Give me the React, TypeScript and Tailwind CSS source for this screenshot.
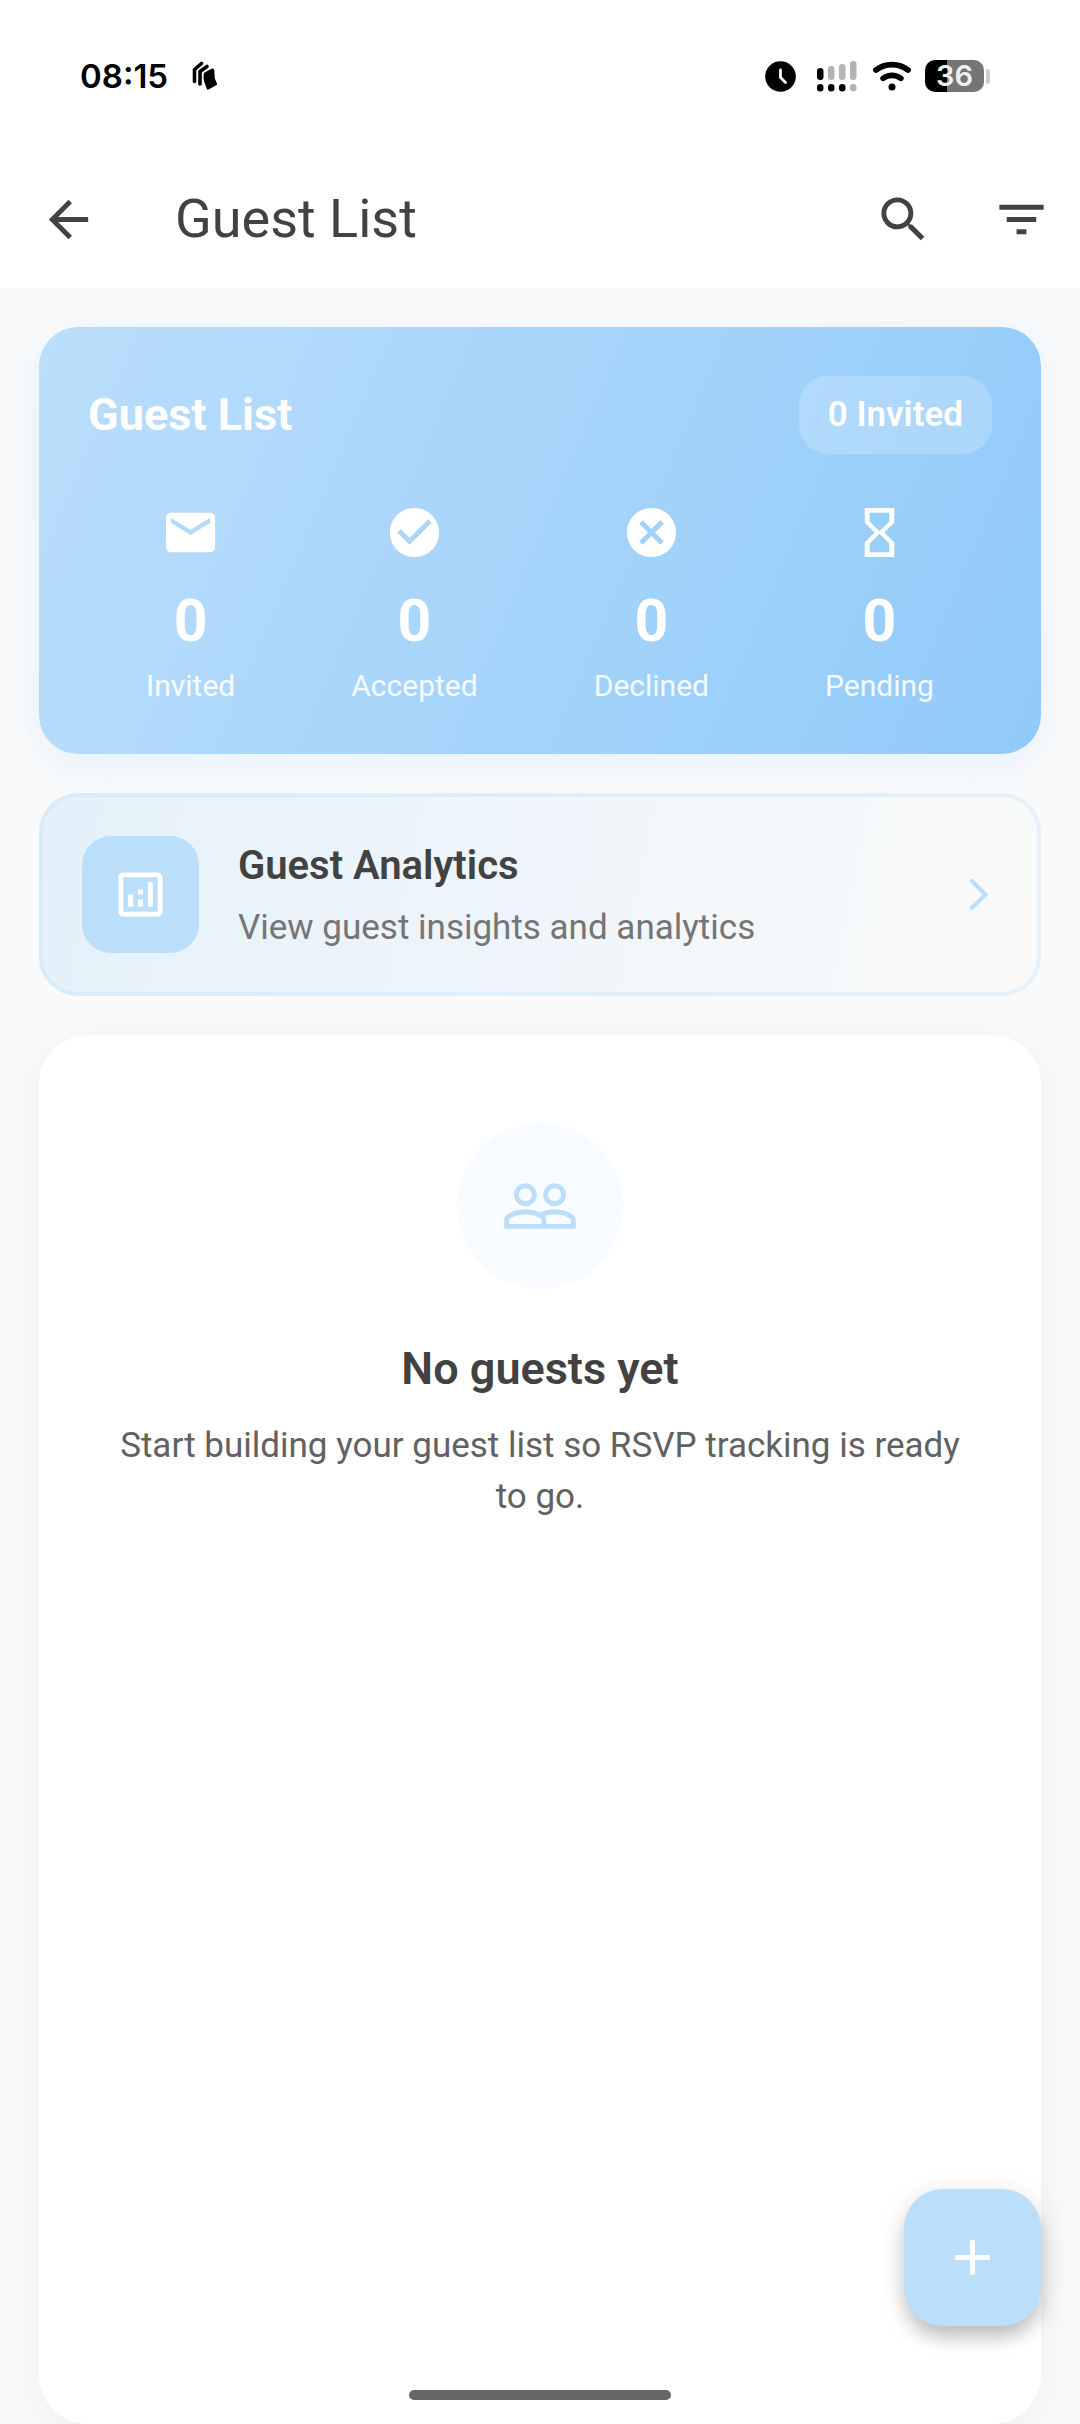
import React from "react";
import {
  MdArrowBack,
  MdSearch,
  MdFilterList,
  MdEmail,
  MdCheckCircle,
  MdCancel,
  MdHourglassEmpty,
  MdOutlineAnalytics,
  MdArrowForwardIos,
  MdPeopleOutline,
  MdAdd,
} from "react-icons/md";
import type { IconType } from "react-icons";

const stats: { label: string; value: number; Icon: IconType }[] = [
  { label: "Invited", value: 0, Icon: MdEmail },
  { label: "Accepted", value: 0, Icon: MdCheckCircle },
  { label: "Declined", value: 0, Icon: MdCancel },
  { label: "Pending", value: 0, Icon: MdHourglassEmpty },
];

function CardsIcon() {
  return (
    <svg width="26" height="30" viewBox="0 0 26 30" aria-hidden="true">
      <g fill="none" stroke="#000" strokeWidth="3.6" strokeLinecap="round" strokeLinejoin="round">
        <path d="M2.5 20.5V8.5L9.5 2.5" />
        <path d="M8 23V10.5L15 5.5" />
      </g>
      <path
        d="M12.5 11.5 20 7.6Q22 7 22.3 9L22.8 17.5 25 22.5Q25.2 23.6 24.3 24.2L16.5 28.6Q15.4 29 14.9 28L12 20Q11.4 17.5 11.6 13Z"
        fill="#000"
      />
    </svg>
  );
}

function ClockIcon() {
  return (
    <svg width="31" height="31" viewBox="0 0 31 31" aria-hidden="true">
      <circle cx="15.5" cy="15.5" r="15.3" fill="#000" />
      <path d="M15.5 9v7.5l5 5" fill="none" stroke="#fff" strokeWidth="2.8" strokeLinecap="round" strokeLinejoin="round" />
    </svg>
  );
}

function SignalIcon() {
  return (
    <svg width="40" height="31" viewBox="0 0 40 31" aria-hidden="true">
      <rect x="0" y="7" width="6.5" height="12" rx="3.2" fill="#000" />
      <rect x="11" y="5" width="6.5" height="14" rx="3.2" fill="#b3b3b3" />
      <rect x="22" y="3" width="6.5" height="16" rx="3.2" fill="#b3b3b3" />
      <rect x="33" y="0" width="6.5" height="19" rx="3.2" fill="#b3b3b3" />
      <rect x="0" y="23" width="6.5" height="7.5" rx="3.2" fill="#000" />
      <rect x="11" y="23" width="6.5" height="7.5" rx="3.2" fill="#000" />
      <rect x="22" y="23" width="6.5" height="7.5" rx="3.2" fill="#000" />
      <rect x="33" y="23" width="6.5" height="7.5" rx="3.2" fill="#b3b3b3" />
    </svg>
  );
}

function WifiIcon() {
  return (
    <svg width="38" height="30" viewBox="0 0 38 30" aria-hidden="true">
      <g fill="none" stroke="#000" strokeWidth="5.8" strokeLinecap="round">
        <path d="M3 9C12 1.8 26 1.8 35 9" />
        <path d="M10.2 17.2c5.2-3.9 12.400-3.900 17.600 0" />
      </g>
      <circle cx="19" cy="26" r="3.5" fill="#000" />
    </svg>
  );
}

function StatusBar() {
  return (
    <div className="flex items-center justify-between pt-[56px] pr-[90px] pl-20 text-black">
      <div className="flex items-center gap-6">
        <span className="font-[Inter,sans-serif] text-[33px] leading-10 font-semibold">08:15</span>
        <CardsIcon />
      </div>
      <div className="flex items-center">
        <ClockIcon />
        <span className="ml-[21px] flex">
          <SignalIcon />
        </span>
        <span className="ml-4 flex">
          <WifiIcon />
        </span>
        <div className="ml-[14px] flex items-center gap-[2px]">
          <div className="flex h-8 w-[59px] items-center justify-center rounded-[10px] bg-[linear-gradient(90deg,#000_37%,#757575_37%)] font-[Inter,sans-serif] text-[29px] leading-8 font-semibold text-[#f0f0f0]">
            36
          </div>
          <div className="h-[15px] w-1 rounded-r-[3px] bg-[#cccccc]" />
        </div>
      </div>
    </div>
  );
}

function AppBar() {
  return (
    <header className="flex items-center pb-[10px] pl-[9px] text-[#424242]">
      <button type="button" aria-label="Back" className="flex size-[118px] items-center justify-center">
        <MdArrowBack size={59} />
      </button>
      <h1 className="ml-12 flex-1 text-[54px] leading-[68px]">Guest List</h1>
      <button type="button" aria-label="Search" className="flex size-[118px] items-center justify-center">
        <MdSearch size={59} />
      </button>
      <button type="button" aria-label="Filter" className="flex size-[118px] items-center justify-center">
        <MdFilterList size={59} />
      </button>
    </header>
  );
}

function SummaryCard() {
  return (
    <section className="rounded-[39px] bg-[linear-gradient(113deg,#bbdefb,#90caf9)] p-[49px] text-white shadow-[0_10px_39px_rgba(187,222,251,0.3)]">
      <div className="flex items-center justify-between">
        <h2 className="text-[45px] leading-[58px] font-bold">Guest List</h2>
        <span className="rounded-[29px] bg-white/20 px-[29px] py-[14px] text-[35px] leading-[50px] font-semibold">
          0 Invited
        </span>
      </div>
      <ul className="mt-[49px] flex justify-around">
        {stats.map(({ label, value, Icon }) => (
          <li key={label} className="flex flex-col items-center">
            <Icon size={59} />
            <span className="mt-5 text-[59px] leading-[78px] font-bold">{value}</span>
            <span className="mt-[6px] text-[30px] leading-[39px] text-white/90">{label}</span>
          </li>
        ))}
      </ul>
    </section>
  );
}

function AnalyticsCard() {
  return (
    <button
      type="button"
      className="flex items-center gap-[39px] rounded-[39px] border-4 border-[#bbdefb]/30 bg-[linear-gradient(101deg,#e4f1fa,#fafafa)] bg-origin-border p-[39px] text-left"
    >
      <span className="flex size-[117px] items-center justify-center rounded-[29px] bg-[#bbdefb] text-white">
        <MdOutlineAnalytics size={59} />
      </span>
      <span className="flex flex-1 flex-col gap-2">
        <span className="text-[40px] leading-[58px] font-semibold text-[#424242]">Guest Analytics</span>
        <span className="text-[35px] leading-[50px] text-[#757575]">View guest insights and analytics</span>
      </span>
      <MdArrowForwardIos size={39} className="text-[#bbdefb]" />
    </button>
  );
}

function EmptyState() {
  return (
    <section className="flex flex-1 flex-col items-center rounded-[49px] bg-white px-[70px] py-[88px] text-center shadow-[0_10px_49px_rgba(0,0,0,0.05)]">
      <div className="flex size-[166px] items-center justify-center rounded-full bg-[#f8fbff] text-[#bbdefb]">
        <MdPeopleOutline size={78} />
      </div>
      <h2 className="mt-[49px] text-[45px] leading-[62px] font-semibold text-[#424242]">No guests yet</h2>
      <p className="mt-5 text-[35px] leading-[51px] text-[#616161]">
        Start building your guest list so RSVP tracking is ready to go.
      </p>
    </section>
  );
}

export default function App() {
  return (
    <div className="relative flex min-h-screen flex-col bg-[#fafafa] font-[Roboto,sans-serif]">
      <div className="flex flex-col gap-16 bg-white">
        <StatusBar />
        <AppBar />
      </div>
      <main className="flex flex-1 flex-col gap-[39px] px-[39px] pt-[39px]">
        <SummaryCard />
        <AnalyticsCard />
        <EmptyState />
      </main>
      <button
        type="button"
        aria-label="Add guest"
        className="fixed right-[39px] bottom-[98px] flex size-[137px] items-center justify-center rounded-[39px] bg-[#bbdefb] text-white shadow-[0_14px_20px_-4px_rgba(0,0,0,0.2),0_6px_28px_rgba(0,0,0,0.14)]"
      >
        <MdAdd size={59} />
      </button>
      <div className="fixed bottom-6 left-1/2 h-[10px] w-[262px] -translate-x-1/2 rounded-full bg-[#666666]" />
    </div>
  );
}
